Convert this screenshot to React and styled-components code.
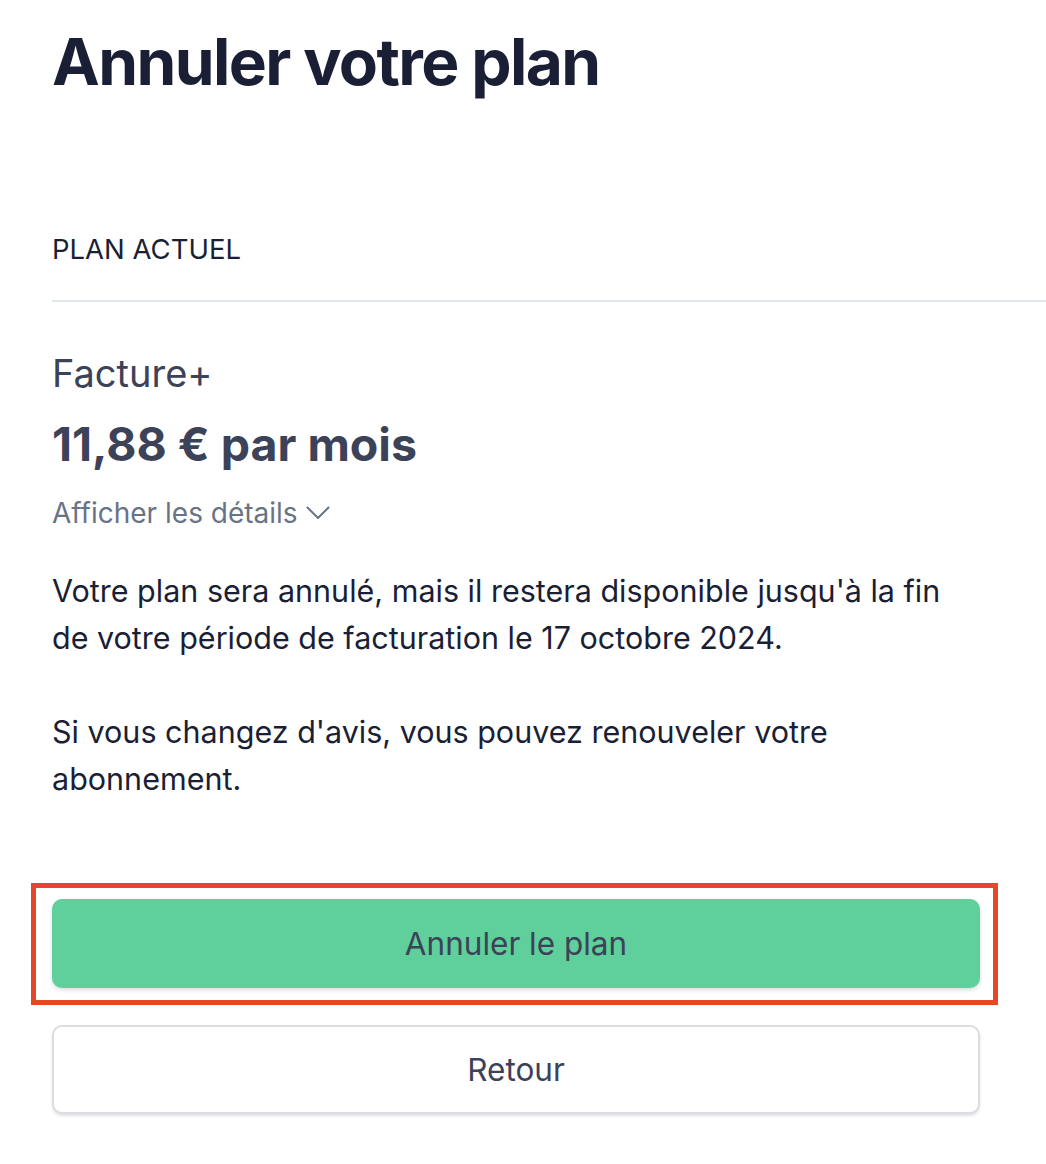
import React from "react";
import styled, { createGlobalStyle } from "styled-components";

const Global = createGlobalStyle`
  html, body {
    margin: 0;
    padding: 0;
    background: #ffffff;
  }
  body {
    font-family: Inter, "Liberation Sans", sans-serif;
    -webkit-font-smoothing: antialiased;
  }
`;

const Page = styled.div`
  padding: 22px 0 40px 52px;
`;

const Title = styled.h1`
  margin: 0;
  font-size: 64px;
  line-height: 80px;
  font-weight: 700;
  letter-spacing: -1.6px;
  color: #1a1f36;
`;

const SectionHead = styled.div`
  margin-top: 130px;
  padding-bottom: 34px;
  border-bottom: 2px solid #e3e8ee;
  font-size: 27.5px;
  line-height: 34px;
  color: #1a1f36;
`;

const Body = styled.div`
  max-width: 920px;
`;

const PlanName = styled.div`
  margin-top: 49px;
  font-size: 38px;
  line-height: 44px;
  color: #3c4257;
`;

const Price = styled.div`
  margin-top: 22px;
  font-size: 46.5px;
  line-height: 54px;
  font-weight: 700;
  color: #3c4257;
`;

const Details = styled.button`
  margin-top: 24px;
  padding: 0;
  border: 0;
  background: none;
  display: inline-flex;
  align-items: center;
  gap: 8px;
  font-family: inherit;
  font-size: 28px;
  line-height: 36px;
  color: #697386;
  cursor: pointer;
`;

const Text = styled.p`
  margin: 36px 0 0;
  font-size: 30.5px;
  line-height: 47px;
  color: #1a1f36;
  & + & {
    margin-top: 47px;
  }
`;

const Actions = styled.div`
  margin-top: 81px;
  margin-left: -21px;
  display: flex;
  flex-direction: column;
  align-items: flex-start;
  gap: 20px;
`;

const Highlight = styled.div`
  border: 5px solid #e8462a;
  padding: 11px 13px 12px 16px;
`;

const Button = styled.button`
  display: block;
  width: 928px;
  margin-left: ${(p) => (p.$outlined ? "21px" : "0")};
  height: 89px;
  border-radius: 10px;
  border: ${(p) => (p.$primary ? "0" : "2px solid #dcdde2")};
  background: ${(p) => (p.$primary ? "#5fcf9b" : "#ffffff")};
  box-shadow: ${(p) =>
    p.$primary
      ? "0 2px 4px rgba(0,0,0,0.14)"
      : "0 2px 3px rgba(0,0,0,0.12)"};
  font-family: inherit;
  font-size: 31.5px;
  color: #3c4257;
  cursor: pointer;
`;

const Chevron = () => (
  <svg width="24" height="14" viewBox="0 0 24 14" fill="none">
    <path d="M1.5 1.5L12 12L22.5 1.5" stroke="#697386" strokeWidth="2" strokeLinecap="round" strokeLinejoin="round" />
  </svg>
);

export default function App() {
  return (
    <Page>
      <Global />
      <Title>Annuler votre plan</Title>
      <SectionHead>PLAN ACTUEL</SectionHead>
      <Body>
        <PlanName>Facture+</PlanName>
        <Price>11,88 € par mois</Price>
        <Details>
          Afficher les détails
          <Chevron />
        </Details>
        <Text>
          Votre plan sera annulé, mais il restera disponible jusqu'à la fin de
          votre période de facturation le 17 octobre 2024.
        </Text>
        <Text>
          Si vous changez d'avis, vous pouvez renouveler votre abonnement.
        </Text>
      </Body>
      <Actions>
        <Highlight>
          <Button $primary>Annuler le plan</Button>
        </Highlight>
        <Button $outlined>Retour</Button>
      </Actions>
    </Page>
  );
}
